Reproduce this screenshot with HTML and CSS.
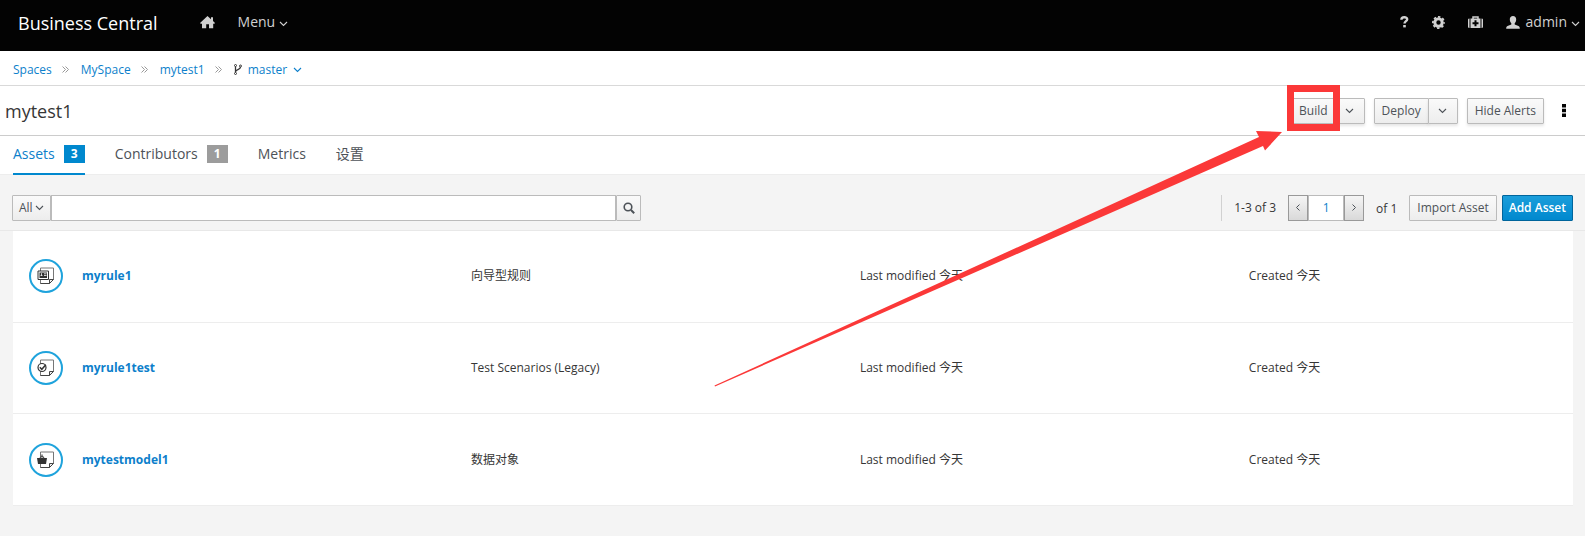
FILE: index.html
```html
<!DOCTYPE html>
<html lang="en">
<head>
<meta charset="utf-8">
<title>Business Central</title>
<link rel="stylesheet" href="styles.css">
</head>
<body>
<svg class="defs" width="0" height="0" aria-hidden="true">
  <symbol id="chev" viewBox="0 0 9 6"><path d="M1 1l3.500 3.500L8 1" fill="none" stroke="currentColor" stroke-width="1.100"/></symbol>
  <symbol id="page" viewBox="0 0 18 18"><path d="M3.500 1h13v11.500l-4 4h-9z" fill="#fff" stroke="#777"/><path d="M3.500 16.500h9M12.500 16.500v-4h4z" fill="#eee" stroke="#444"/></symbol>
</svg>
<header class="masthead">
  <a class="brand" href="#">Business Central</a>
  <a class="home" href="#" aria-label="Home"><svg width="15" height="13" viewBox="0 0 15 13" fill="currentColor"><path d="M7.500 0L11 3.200V1.200h2v3.900l2 1.900-.6.800h-1.200V12.200H9V8.300H6.200v3.900H2V7.800H.7L0 7z"/></svg></a>
  <button class="nav-btn">Menu<svg class="chev" width="9" height="6"><use href="#chev"/></svg></button>
  <div class="utilities">
    <button class="nav-btn" aria-label="Help"><svg width="9" height="12" viewBox="0 0 9 12"><path d="M1.400 3.700C1.400 0.700 7.200.5 7.200 3.200c0 1.900-2.700 2-2.700 4.400" fill="none" stroke="currentColor" stroke-width="2.400"/><path d="M3.200 9h2.600v2.400H3.200z" fill="currentColor"/></svg></button>
    <button class="nav-btn" aria-label="Settings"><svg width="13" height="13" viewBox="0 0 13 13"><circle cx="6.500" cy="6.500" r="3.700" fill="none" stroke="currentColor" stroke-width="3"/><circle cx="6.500" cy="6.500" r="5.600" fill="none" stroke="currentColor" stroke-width="1.800" stroke-dasharray="2.400 2" stroke-dashoffset="1.200"/></svg></button>
    <button class="nav-btn" aria-label="Kit"><svg width="15" height="13" viewBox="0 0 15 13"><path d="M5 3V1h5v2" fill="none" stroke="currentColor" stroke-width="1.500"/><path d="M0 3.500Q0 2.500 1.500 2.500V12Q0 12 0 11zM2.500 2.500h10V12h-10zM13.500 2.500Q15 2.500 15 3.500V11Q15 12 13.500 12z" fill="currentColor"/><path d="M7.500 4.300v6M4.500 7.300h6" stroke="#030303" stroke-width="2"/></svg></button>
    <button class="nav-btn user"><svg width="14" height="13" viewBox="0 0 14 13" fill="currentColor"><path d="M7 0c2 0 3.200 1.400 3.200 3.300C10.200 5 9.500 6.600 8.700 7.300v1.200l3.800 1.600c1 .5 1.300 1.300 1.300 2.700H.2c0-1.400.3-2.200 1.300-2.700l3.800-1.600V7.300C4.500 6.600 3.800 5 3.800 3.300 3.800 1.400 5 0 7 0z"/></svg><span>admin</span><svg class="chev" width="9" height="6"><use href="#chev"/></svg></button>
  </div>
</header>
<nav class="crumbs" aria-label="Breadcrumb">
  <a href="#">Spaces</a><svg class="sep" width="7" height="7" viewBox="0 0 7 7"><path d="M.5.500l3 3-3 3M3.500.500l3 3-3 3"/></svg>
  <a href="#">MySpace</a><svg class="sep" width="7" height="7" viewBox="0 0 7 7"><path d="M.5.500l3 3-3 3M3.500.500l3 3-3 3"/></svg>
  <a href="#">mytest1</a><svg class="sep" width="7" height="7" viewBox="0 0 7 7"><path d="M.5.500l3 3-3 3M3.500.500l3 3-3 3"/></svg>
  <a class="branch" href="#"><svg width="8" height="11" viewBox="0 0 8 11" fill="none" stroke="#363636"><circle cx="1.500" cy="1.500" r="1"/><circle cx="1.500" cy="9.500" r="1"/><circle cx="6.500" cy="2" r="1"/><path d="M1.500 2.500v6M6.500 3c0 3.200-5 2-5 5" stroke-width="1.300"/></svg>master<svg class="chev" width="9" height="6"><use href="#chev"/></svg></a>
</nav>
<section class="titlebar">
  <h1>mytest1</h1>
  <div class="actions">
    <div class="group"><button class="btn">Build</button><button class="btn caret" aria-label="Build options"><svg width="9" height="6"><use href="#chev"/></svg></button><span class="highlight"></span></div>
    <div class="group"><button class="btn">Deploy</button><button class="btn caret" aria-label="Deploy options"><svg width="9" height="6"><use href="#chev"/></svg></button></div>
    <button class="btn">Hide Alerts</button>
    <button class="kebab" aria-label="More"><svg width="4" height="13" viewBox="0 0 4 13" fill="#030303"><path d="M0 0h4v3.500H0zM0 4.700h4v3.500H0zM0 9.400h4v3.500H0z"/></svg></button>
  </div>
</section>
<nav class="tabs" aria-label="Project">
  <a class="tab active" href="#">Assets<span class="badge">3</span></a>
  <a class="tab" href="#">Contributors<span class="badge">1</span></a>
  <a class="tab" href="#">Metrics</a>
  <a class="tab" href="#">设置</a>
</nav>
<section class="toolbar">
  <form class="search">
    <button type="button" class="btn flat">All<svg width="9" height="6"><use href="#chev"/></svg></button><input type="text" aria-label="Filter assets"><button type="button" class="btn flat find" aria-label="Search"><svg width="12" height="12" viewBox="0 0 12 12" fill="none" stroke="currentColor"><circle cx="5" cy="5" r="3.800" stroke-width="1.600"/><path d="M8 8l3.200 3.200" stroke-width="2"/></svg></button>
  </form>
  <div class="paging">
    <span class="range">1-3 of 3</span>
    <div class="pager"><button class="step" aria-label="Previous"><svg width="4" height="7" viewBox="0 0 4 7"><path d="M3.500.5l-3 3 3 3"/></svg></button><input type="text" value="1" aria-label="Page"><button class="step" aria-label="Next"><svg width="4" height="7" viewBox="0 0 4 7"><path d="M.5.500l3 3-3 3"/></svg></button></div>
    <span class="total">of 1</span>
    <button class="btn flat">Import Asset</button>
    <button class="btn primary">Add Asset</button>
  </div>
</section>
<main>
  <ul class="assets">
    <li>
      <span class="icon"><svg width="18" height="18"><use href="#page"/><g><path d="M1 4h10.500v8.500H1z" fill="#fff" stroke="#333"/><path d="M2.500 5.500h7.500v5.500H2.500z" fill="#333"/><path d="M4.500 6.200v2.300M3.500 8.500h2M7 6.800h2.500M7 8.500h2.500" stroke="#fff" stroke-width=".8"/></g></svg></span>
      <a href="#">myrule1</a><span>向导型规则</span><span>Last modified 今天</span><span>Created 今天</span>
    </li>
    <li>
      <span class="icon"><svg width="18" height="18"><use href="#page"/><circle cx="5" cy="8.500" r="4" fill="#fff" stroke="#333" stroke-width="1.200"/><path d="M2.800 8.300l2 2 4-4.500" fill="none" stroke="#333" stroke-width="1.500"/></svg></span>
      <a href="#">myrule1test</a><span>Test Scenarios (Legacy)</span><span>Last modified 今天</span><span>Created 今天</span>
    </li>
    <li>
      <span class="icon"><svg width="18" height="18"><use href="#page"/><path d="M0 7h10l-1 6H1z" fill="#333"/><path d="M3 7l2-2 2 2M5 3.500V6" fill="none" stroke="#555" stroke-width="1.300"/></svg></span>
      <a href="#">mytestmodel1</a><span>数据对象</span><span>Last modified 今天</span><span>Created 今天</span>
    </li>
  </ul>
</main>
<svg class="arrow" width="568" height="256" viewBox="0 0 568 256" aria-hidden="true"><path d="M.5 254.500L545 6l-3-6 26 1-17 18.500-2-4.500L1 255.500z"/></svg>
</body>
</html>
```
FILE: styles.css
```css
* { box-sizing: border-box; }
body {
  position: relative;
  margin: 0;
  min-height: 100vh;
  background: #f4f4f4;
  color: #363636;
  font: 12px/18px "Open Sans", "Noto Sans CJK SC", sans-serif;
}
a { color: #0d7fcb; text-decoration: none; }
button, input { font: inherit; color: inherit; margin: 0; }
svg { display: block; flex: none; }
.defs { position: absolute; }

.masthead {
  display: flex;
  align-items: center;
  height: 51px;
  padding: 0 5px 7px 18px;
  background: #030303;
  color: #d1d1d1;
  font-size: 14px;
}
.brand { color: #fff; font-size: 18px; line-height: 24px; padding-top: 2px; }
.home { color: inherit; margin: 0 23px 0 42px; }
.nav-btn {
  display: flex;
  align-items: center;
  gap: 4px;
  padding: 0;
  border: 0;
  background: none;
}
.nav-btn .chev { margin-top: 3px; }
.utilities { display: flex; align-items: center; gap: 23px; margin-left: auto; }
.user span { margin-left: 2px; }

.crumbs {
  display: flex;
  align-items: center;
  gap: 12px;
  height: 35px;
  padding: 3px 13px 0;
  border-bottom: 1px solid #d9d9d9;
  background: #fff;
}
.crumbs .sep { margin-left: -2px; fill: none; stroke: #999; }
.branch { display: flex; align-items: center; gap: 6px; }

.titlebar {
  display: flex;
  align-items: center;
  justify-content: space-between;
  height: 50px;
  padding: 0 19px 0 5px;
  border-bottom: 1px solid #ccc;
  background: #fff;
}
h1 { margin: 0; font-size: 18px; line-height: 24px; font-weight: 400; }
.actions { display: flex; align-items: center; gap: 9px; }
.group { position: relative; display: flex; }
.btn {
  display: flex;
  align-items: center;
  justify-content: center;
  height: 26px;
  padding: 0 7px;
  border: 1px solid #bbb;
  border-radius: 1px;
  background: linear-gradient(#fafafa, #ededed);
  box-shadow: 0 2px 3px rgba(3, 3, 3, .1);
  color: #4d5258;
  font-weight: 500;
  white-space: nowrap;
}
.btn.caret { width: 30px; padding: 0; margin-left: -1px; }
.btn.flat { box-shadow: none; }
.highlight {
  position: absolute;
  top: -13px;
  left: -4px;
  width: 53px;
  height: 46px;
  border: 7px solid #fb3838;
  pointer-events: none;
}
.kebab { padding: 0; border: 0; background: none; margin-left: 9px; }

.tabs {
  display: flex;
  gap: 30px;
  height: 39px;
  padding: 0 13px;
  border-bottom: 1px solid #ededed;
  background: #fff;
  font-size: 14px;
}
.tab { display: flex; align-items: center; height: 39px; padding-bottom: 4px; color: #4d5258; }
.tab.active { color: #0d7fcb; border-bottom: 2px solid #0088ce; padding-bottom: 2px; }
.badge {
  width: 21px;
  margin-left: 9px;
  background: #9c9c9c;
  color: #fff;
  font-size: 12px;
  font-weight: 700;
  text-align: center;
}
.active .badge { background: #0088ce; }

.toolbar {
  display: flex;
  align-items: center;
  justify-content: space-between;
  height: 56px;
  padding: 20px 12px 10px;
  border-bottom: 1px solid #e8e8e8;
}
.search { display: flex; flex: 0 1 629px; }
.search input { flex: 1; min-width: 0; height: 26px; border: 1px solid #bbb; background: #fff; }
.search .btn { gap: 2px; padding: 0 6px; }
.search .find { width: 25px; padding: 0; }
.paging { display: flex; align-items: center; }
.range { height: 26px; padding: 4px 12px; border-left: 1px solid #d1d1d1; font-weight: 500; }
.pager { display: flex; }
.pager input { width: 36px; height: 26px; padding: 0; border: 1px solid #bbb; text-align: center; color: #0d7fcb; }
.step {
  display: flex;
  align-items: center;
  justify-content: center;
  width: 20px;
  height: 26px;
  padding: 0;
  border: 1px solid #999;
  background: linear-gradient(#f5f5f5, #d9d9d9);
}
.step svg { fill: none; stroke: #4d5258; }
.total { margin: 2px 12px 0; }
.btn.primary {
  margin-left: 5px;
  padding: 0 6px;
  border-color: #00659c;
  background: linear-gradient(#1b9edb, #0088ce);
  box-shadow: none;
  color: #fff;
  font-weight: 600;
}

main { padding: 0 12px 0 13px; }
.assets {
  display: grid;
  grid-auto-rows: 1fr;
  min-height: 275px;
  margin: 0;
  padding: 0;
  list-style: none;
  background: #fff;
}
.assets li {
  display: grid;
  grid-template-columns: 53px repeat(3, minmax(0, 6fr)) minmax(0, 5fr);
  align-items: center;
  padding-left: 16px;
  border-bottom: 1px solid #ededed;
}
.assets a { font-weight: 700; }
.icon {
  display: grid;
  place-items: center;
  width: 34px;
  height: 34px;
  border: 2px solid #1fa3dc;
  border-radius: 50%;
}
.arrow { position: absolute; top: 131px; right: 303px; fill: #fb3838; pointer-events: none; }
```
